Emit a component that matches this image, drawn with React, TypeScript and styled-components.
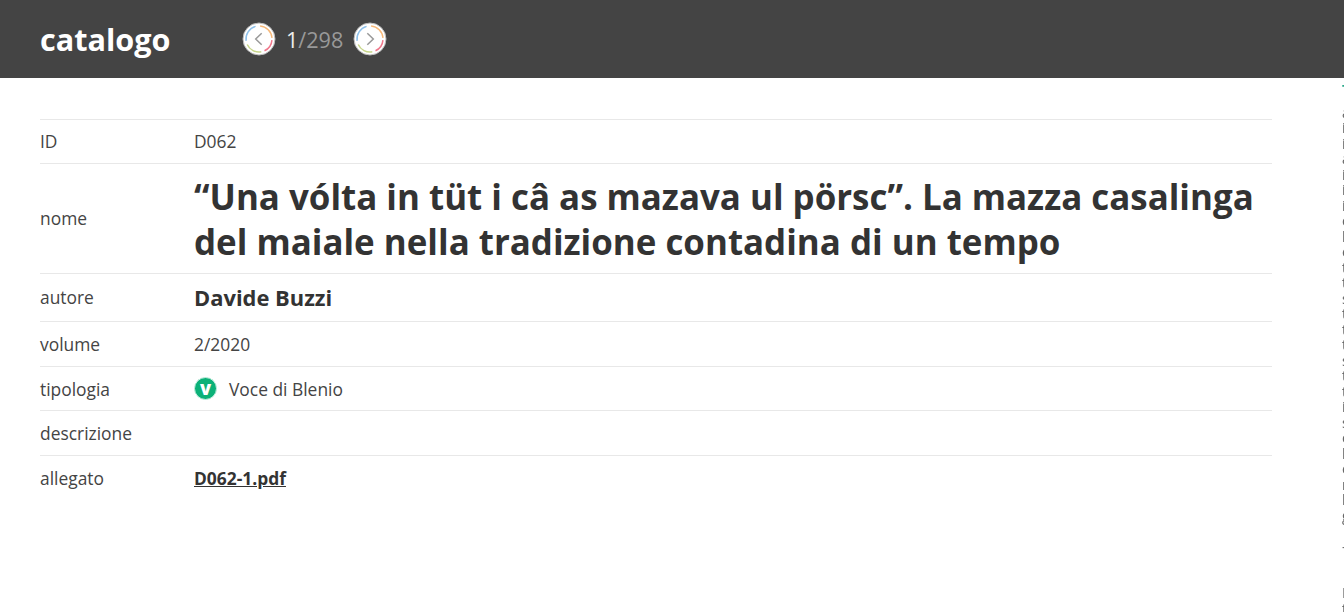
import React from 'react';
import styled, { createGlobalStyle } from 'styled-components';

const GlobalStyle = createGlobalStyle`
  html, body {
    margin: 0;
    padding: 0;
    height: 100%;
    overflow: hidden;
    background: #fff;
    font-family: "Open Sans", "Liberation Sans", sans-serif;
    color: #333;
  }
`

const Header = styled.header`
  height: 78px;
  background: #444;
  display: flex;
  align-items: center;
  padding-left: 40px;
`
const Logo = styled.div`
  width: 202px;
  font-size: 30.6px;
  font-weight: 700;
  color: #fff;
`
const Pager = styled.div`
  display: flex;
  align-items: center;
  gap: 10px;
`
const Counter = styled.div`
  font-size: 21.6px;
  color: #999;
  b {
    font-weight: 400;
    color: #eee;
  }
`
const Main = styled.main`
  padding: 41px 72px 0 40px;
`
const Row = styled.div<{ $height: number }>`
  display: flex;
  align-items: center;
  height: ${(props) => props.$height}px;
  border-top: 1px solid #e8e8e8;
  box-sizing: border-box;
  font-size: 17.4px;
`
const Label = styled.div<{ $lift?: boolean }>`
  width: 154px;
  flex-shrink: 0;
  color: #444;
  padding-bottom: ${(props) => (props.$lift ? 2 : 0)}px;
`
const Value = styled.div<{ $lift?: boolean }>`
  color: #444;
  display: flex;
  align-items: center;
  gap: 12px;
  padding-bottom: ${(props) => (props.$lift ? 2 : 0)}px;
`
const Title = styled.h1`
  margin: 0;
  font-size: 34.9px;
  line-height: 45px;
  font-weight: 700;
  color: #333;
`
const Author = styled.div`
  font-size: 21.9px;
  font-weight: 700;
  color: #333;
`
const Badge = styled.span`
  width: 23px;
  height: 23px;
  border-radius: 50%;
  background: #0cb178;
  border: 1px solid #c5eee0;
  box-sizing: border-box;
  color: #fff;
  font-size: 16px;
  font-weight: 800;
  display: flex;
  align-items: center;
  justify-content: center;
`
const FileLink = styled.a`
  font-weight: 700;
  color: #333;
  text-decoration: underline;
`
const SidePanel = styled.div`
  position: absolute;
  left: 1342px;
  top: 78px;
  width: 2px;
  height: 534px;
  overflow: hidden;
  font-size: 14px;
  line-height: 15.5px;
  color: #666;
  white-space: pre;
  will-change: opacity;
`
const SideHeading = styled.div`
  color: #2aa98a;
  font-weight: 700;
  margin-top: 4px;
  margin-bottom: 7px;
`

const NavButton = ({ direction }: { direction: 'prev' | 'next' }) => (
  <svg width="34" height="34" viewBox="0 0 34 34">
    <circle cx="17" cy="17" r="16" fill="#fff" stroke="#bbb" strokeWidth="1" />
    <g fill="none" strokeWidth="1.5">
      <path d="M4.100 18.800A13 13 0 0 1 13.600 4.400" stroke="#8fc1ea" />
      <path d="M18.100 4.050A13 13 0 0 1 30 15.900" stroke="#f7b878" />
      <path d="M29.950 18.100A13 13 0 0 1 22.500 28.800" stroke="#f0788c" />
      <path d="M19.300 29.800A13 13 0 0 1 5.200 22.500" stroke="#c7d68a" />
    </g>
    <path
      d={direction === 'prev' ? 'M19.700 11.300L13.700 17l6 5.700' : 'M14.300 11.300l6 5.700-6 5.700'}
      fill="none"
      stroke="#999"
      strokeWidth="1.500"
    />
  </svg>
)

const sideText = 'a\ni\ni\na\ni\ni\ni\nc\nl\ne\nt\nt\ns\nt\nt\nt\ns\nt\nt\ni\ns\nc\nl\ne\nn\nl\ng\n\n-\n\n\nI\nt'

export default function App() {
  return (
    <>
      <GlobalStyle />
      <Header>
        <Logo>catalogo</Logo>
        <Pager>
          <NavButton direction="prev" />
          <Counter><b>1</b>/298</Counter>
          <NavButton direction="next" />
        </Pager>
      </Header>
      <Main>
        <Row $height={44}>
          <Label $lift>ID</Label>
          <Value $lift>D062</Value>
        </Row>
        <Row $height={110}>
          <Label $lift>nome</Label>
          <Title>“Una vólta in tüt i câ as mazava ul pörsc”. La mazza casalinga del maiale nella tradizione contadina di un tempo</Title>
        </Row>
        <Row $height={48}>
          <Label $lift>autore</Label>
          <Author>Davide Buzzi</Author>
        </Row>
        <Row $height={45}>
          <Label>volume</Label>
          <Value>2/2020</Value>
        </Row>
        <Row $height={44}>
          <Label>tipologia</Label>
          <Value><Badge>V</Badge>Voce di Blenio</Value>
        </Row>
        <Row $height={45}>
          <Label>descrizione</Label>
        </Row>
        <Row $height={45}>
          <Label>allegato</Label>
          <Value><FileLink href="#">D062-1.pdf</FileLink></Value>
        </Row>
      </Main>
      <SidePanel aria-hidden="true">
        <SideHeading>T</SideHeading>
        {sideText}
      </SidePanel>
    </>
  )
}
